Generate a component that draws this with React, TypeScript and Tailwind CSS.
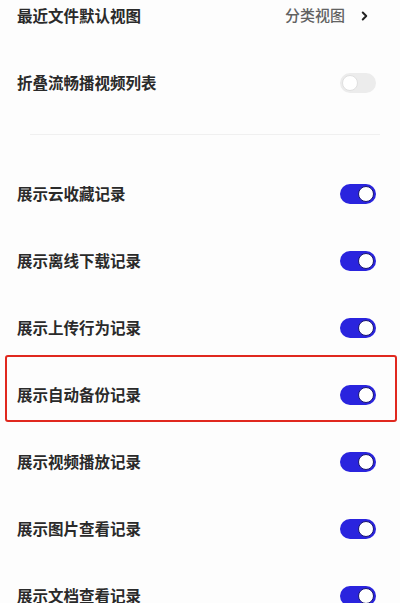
import React from 'react';

// 开启状态的行
const ROWS_ON = [
  '展示云收藏记录',
  '展示离线下载记录',
  '展示上传行为记录',
  '展示自动备份记录',
  '展示视频播放记录',
  '展示图片查看记录',
  '展示文档查看记录',
];

function Toggle({ on }: { on: boolean }) {
  return (
    <div
      className={`flex h-[20px] w-[36px] items-center rounded-full px-[2px] ${
        on ? 'justify-end bg-[#2a24de]' : 'justify-start bg-[#ececec]'
      }`}
    >
      <div
        className={`h-[16px] w-[16px] rounded-full bg-white ${
          on ? 'border-[1.5px] border-[#1a1670]' : 'border border-[#e0e0e0]'
        }`}
      />
    </div>
  );
}

export default function App() {
  return (
    <div
      className="relative h-[603px] w-[400px] overflow-hidden bg-[#fdfdfd] text-[#2a2a2a]"
      style={{ fontFamily: '"Noto Sans CJK SC", "Noto Sans", sans-serif' }}
    >
      <div className="-mt-[18px] flex flex-col">
        <div className="flex h-[67px] items-center justify-between pl-[17px] pr-[32px]">
          <span className="text-[15.5px] font-semibold">最近文件默认视图</span>
          <div className="flex items-center gap-[16px]">
            <span className="text-[15px] font-medium text-[#626262]">分类视图</span>
            <svg viewBox="0 0 10 14" className="h-[10px] w-[7px]" fill="none" stroke="#222" strokeWidth={2.8} strokeLinecap="round" strokeLinejoin="round">
              <polyline points="2.5 2 7.5 7 2.5 12" />
            </svg>
          </div>
        </div>
        <div className="flex h-[67px] items-center justify-between pl-[17px] pr-[24px]">
          <span className="text-[15.5px] font-semibold">折叠流畅播视频列表</span>
          <Toggle on={false} />
        </div>

        {/* 分割线 */}
        <div className="flex h-[44px] items-center px-[30px] pb-[8px] pr-[20px]">
          <div className="h-px w-full bg-[#f0f0f0]" />
        </div>

        {ROWS_ON.map((label) => (
          <div key={label} className="flex h-[67px] items-center justify-between pl-[17px] pr-[24px]">
            <span className="text-[15.5px] font-semibold">{label}</span>
            <Toggle on />
          </div>
        ))}
      </div>

      {/* 红框标注 */}
      <div className="pointer-events-none absolute left-[5px] top-[355px] h-[67px] w-[392px] rounded-[3px] border-2 border-[#e0281e]" />
    </div>
  );
}
